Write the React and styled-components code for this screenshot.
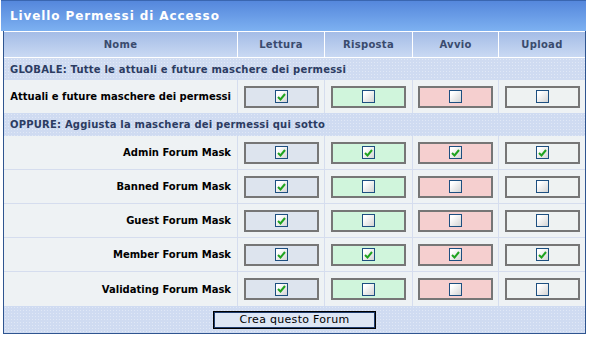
import React from "react";
import styled, { createGlobalStyle } from "styled-components";

const GlobalStyle = createGlobalStyle`
  body {
    margin: 0;
    background: #ffffff;
    font-family: "DejaVu Sans", Verdana, sans-serif;
  }
`;

const COLS = "233px 86px 87px 85px 86px";

const StPanel = styled.div`
  margin-left: 3px;
  width: 581px;
  border: 1px solid #2f5590;
  border-top: none;
  background: #d5ddee;
`;

const StTitle = styled.div`
  height: 30px;
  margin-left: -3px;
  margin-right: -1px;
  border-top: 1px solid #3a66b0;
  background: linear-gradient(#5587dc, #7db1f1);
  color: #ffffff;
  font-size: 12px;
  font-weight: bold;
  letter-spacing: 0.9px;
  line-height: 31px;
  padding-left: 9px;
`;

const StHeadRow = styled.div`
  display: grid;
  grid-template-columns: ${COLS};
  column-gap: 1px;
  background: #ffffff;
  padding: 1px 0;
`;

const StHeadCell = styled.div`
  height: 25px;
  display: flex;
  align-items: center;
  justify-content: center;
  background: linear-gradient(#a4bce6, #c9d9f3);
  color: #3a4b6e;
  font-size: 10px;
  font-weight: bold;
  letter-spacing: 0.3px;
`;

const StCategory = styled.div`
  height: ${(p) => p.$h}px;
  display: flex;
  align-items: center;
  padding-left: 6px;
  background-color: #cfdbf1;
  background-image: radial-gradient(rgba(255, 255, 255, 0.35) 0.6px, transparent 0.8px);
  background-size: 3px 3px;
  color: #2c3c62;
  font-size: 10px;
  font-weight: bold;
  letter-spacing: 0.2px;
`;

const StRow = styled.div`
  display: grid;
  grid-template-columns: ${COLS};
  column-gap: 1px;
  border-bottom: ${(p) => (p.$last ? "none" : "1px solid #d5ddee")};
`;

const StNameCell = styled.div`
  height: ${(p) => p.$h}px;
  display: flex;
  align-items: center;
  justify-content: flex-end;
  padding-right: 6px;
  background: #eef2f4;
  color: #000000;
  font-size: 10px;
  font-weight: bold;
`;

const StBoxCell = styled.div`
  display: flex;
  align-items: center;
  justify-content: center;
  background: #eef2f4;
`;

const StColorBox = styled.div`
  width: 71px;
  height: 18px;
  border: 2px solid #767676;
  background: ${(p) => p.$bg};
  display: flex;
  align-items: center;
  justify-content: center;
`;

const StCheck = styled.div`
  width: 11px;
  height: 11px;
  border: 1px solid #1d4f80;
  background: linear-gradient(135deg, #ffffff 20%, #d4d4d4 100%);
  display: flex;
  align-items: center;
  justify-content: center;
`;

const StFooter = styled.div`
  height: 27px;
  display: flex;
  align-items: center;
  justify-content: center;
  background-color: #cfdbf1;
  background-image: radial-gradient(rgba(255, 255, 255, 0.35) 0.6px, transparent 0.8px);
  background-size: 3px 3px;
`;

const StButton = styled.button`
  width: 163px;
  height: 18px;
  padding: 0;
  border: 1px solid #000000;
  box-shadow: inset 0 0 0 1px #1e3c6e;
  background: #dde6f4;
  color: #000000;
  font-family: "DejaVu Sans", Verdana, sans-serif;
  font-size: 11px;
  letter-spacing: 0.3px;
`;

const COLORS = ["#dde4ee", "#d0f5dc", "#f5cfcf", "#eef2f2"];

function Check({ on }) {
  return (
    <StCheck>
      {on ? (
        <svg width="9" height="8" viewBox="0 0 9 8">
          <path d="M1 4 L3.5 6.5 L8 1" fill="none" stroke="#1fa31f" strokeWidth="2" />
        </svg>
      ) : null}
    </StCheck>
  );
}

function PermRow({ name, checks, h = 33, last }) {
  return (
    <StRow $last={last}>
      <StNameCell $h={h}>{name}</StNameCell>
      {checks.map((c, i) => (
        <StBoxCell key={i}>
          <StColorBox $bg={COLORS[i]}>
            <Check on={c} />
          </StColorBox>
        </StBoxCell>
      ))}
    </StRow>
  );
}

const masks = [
  { name: "Admin Forum Mask", checks: [true, true, true, true] },
  { name: "Banned Forum Mask", checks: [true, false, false, false] },
  { name: "Guest Forum Mask", checks: [true, false, false, false] },
  { name: "Member Forum Mask", checks: [true, true, true, true] },
  { name: "Validating Forum Mask", checks: [true, false, false, false] },
];

export default function App() {
  return (
    <>
      <GlobalStyle />
      <StPanel>
        <StTitle>Livello Permessi di Accesso</StTitle>
        <StHeadRow>
          <StHeadCell>Nome</StHeadCell>
          <StHeadCell>Lettura</StHeadCell>
          <StHeadCell>Risposta</StHeadCell>
          <StHeadCell>Avvio</StHeadCell>
          <StHeadCell>Upload</StHeadCell>
        </StHeadRow>
        <StCategory $h={22}>GLOBALE: Tutte le attuali e future maschere dei permessi</StCategory>
        <PermRow name="Attuali e future maschere dei permessi" checks={[true, false, false, false]} h={33} last />
        <StCategory $h={23}>OPPURE: Aggiusta la maschera dei permessi qui sotto</StCategory>
        {masks.map((m, i) => (
          <PermRow key={m.name} name={m.name} checks={m.checks} h={i === masks.length - 1 ? 34 : 33} last={i === masks.length - 1} />
        ))}
        <StFooter>
          <StButton>Crea questo Forum</StButton>
        </StFooter>
      </StPanel>
    </>
  );
}
